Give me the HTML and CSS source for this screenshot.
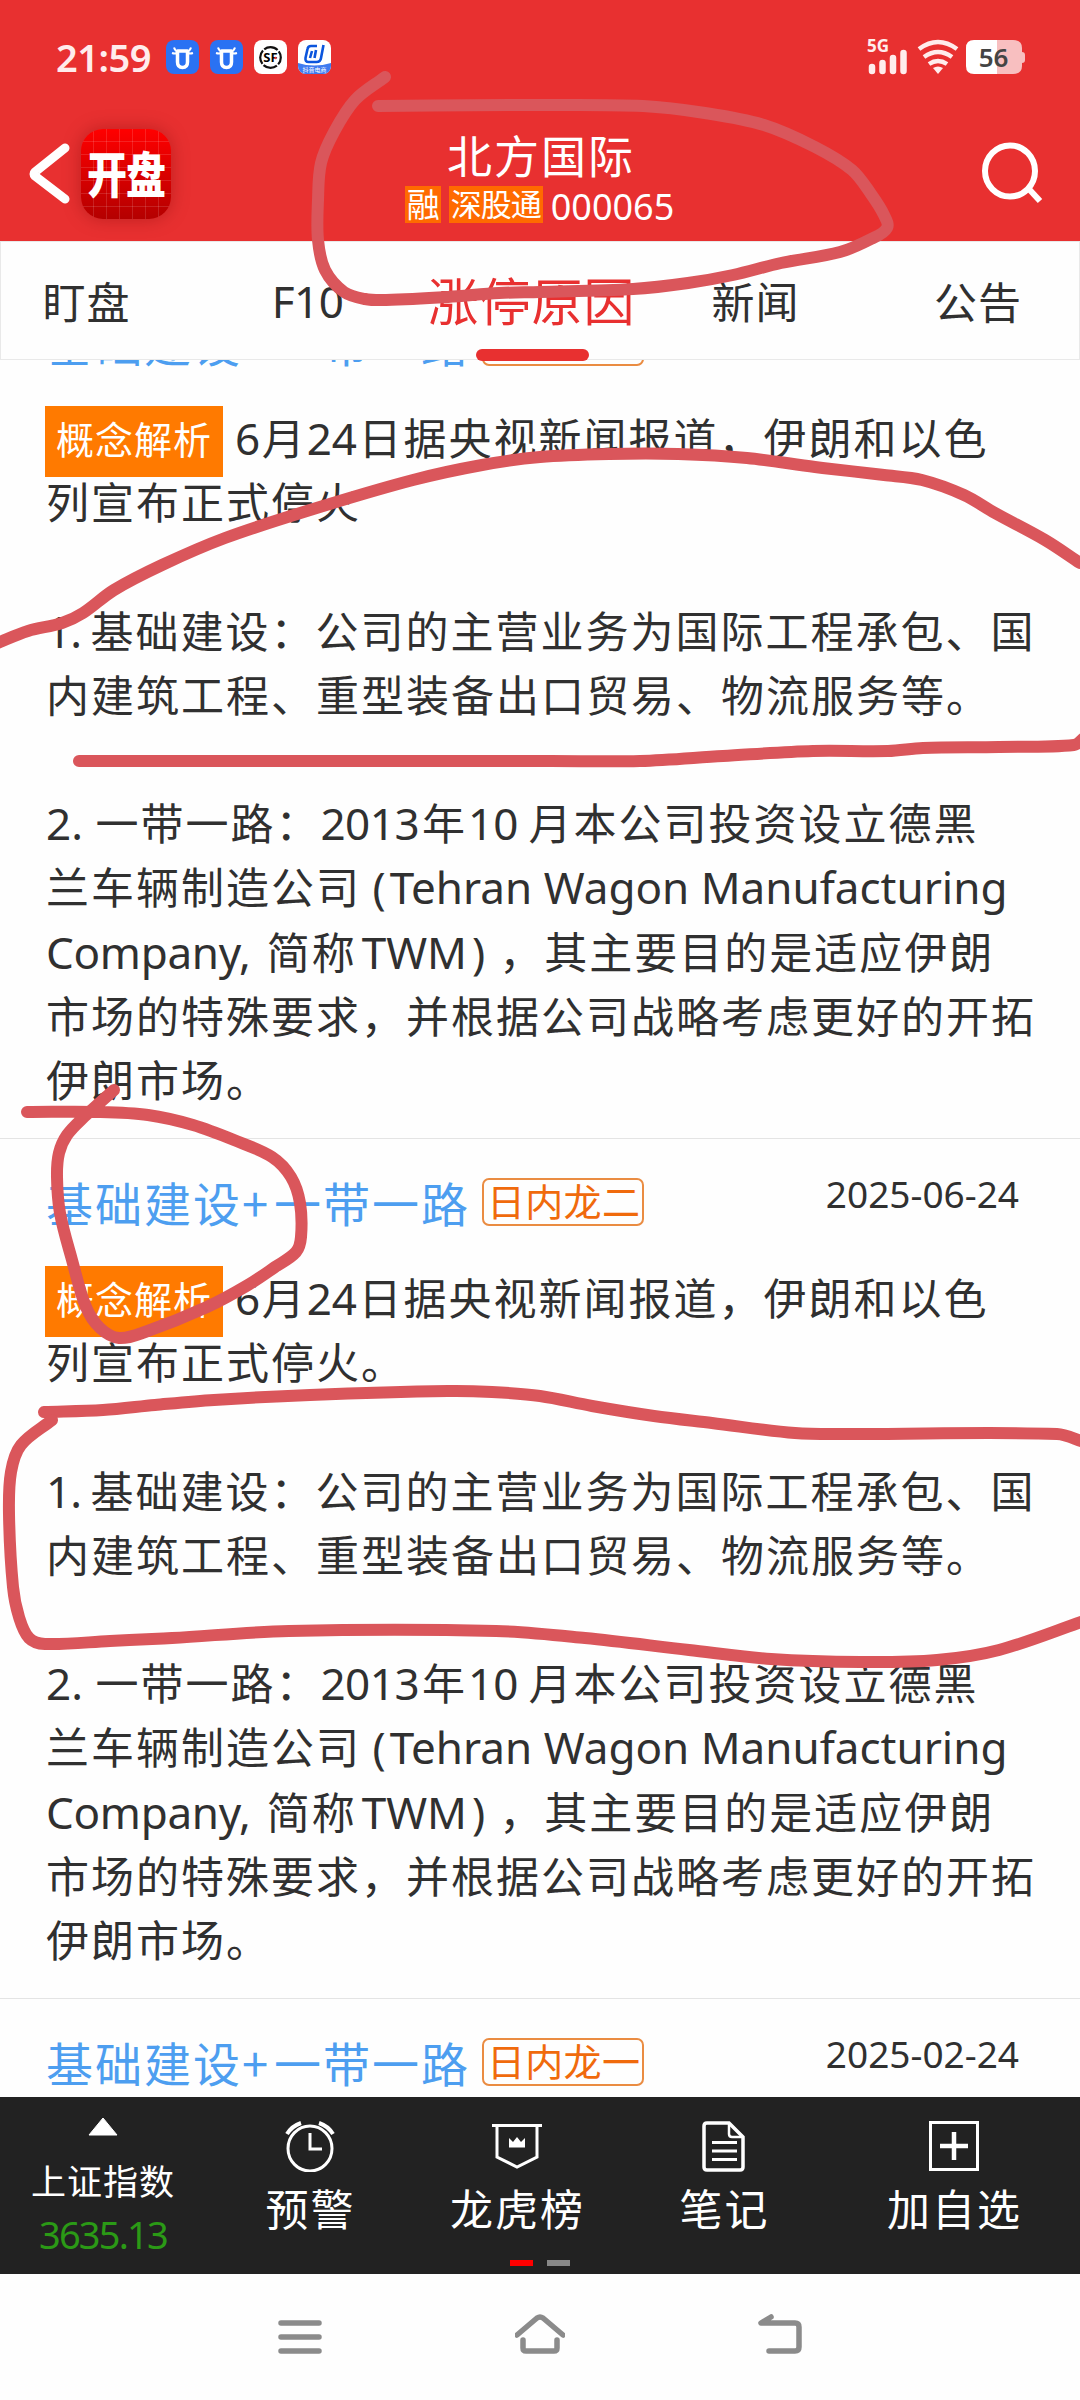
FILE: index.html
```html
<!DOCTYPE html>
<html lang="zh-CN">
<head>
    <meta charset="UTF-8">
    <meta name="viewport" content="width=device-width, initial-scale=1.0">
    <title>北方国际 000065</title>
    <link rel="stylesheet" href="styles.css">
</head>
<body>
    <!-- Header -->
    <header class="header">
        <div class="status">
            <span class="clock">21:59</span>
            <div class="notify">
                <svg width="33" height="34" viewBox="0 0 33 34">
                    <rect width="33" height="34" rx="8" fill="#2a72f3"/>
                    <path d="M8 7.500q1 3.500 4 4M25 7.500q-1 3.500-4 4M6 13q3 1 5 0M27 13q-3 1-5 0" stroke="#fff" stroke-width="2" fill="none"/>
                    <path d="M11.500 11h10v11q0 5.500-5 5.500t-5-5.500z" stroke="#fff" stroke-width="3.500" stroke-linejoin="round" fill="none"/>
                </svg>
                <svg width="33" height="34" viewBox="0 0 33 34">
                    <rect width="33" height="34" rx="8" fill="#2a72f3"/>
                    <path d="M8 7.500q1 3.500 4 4M25 7.500q-1 3.500-4 4M6 13q3 1 5 0M27 13q-3 1-5 0" stroke="#fff" stroke-width="2" fill="none"/>
                    <path d="M11.500 11h10v11q0 5.500-5 5.500t-5-5.500z" stroke="#fff" stroke-width="3.500" stroke-linejoin="round" fill="none"/>
                </svg>
                <svg width="33" height="34" viewBox="0 0 33 34">
                    <rect width="33" height="34" rx="8" fill="#fff"/>
                    <circle cx="16.500" cy="17.500" r="10.300" fill="none" stroke="#111" stroke-width="2.200" stroke-dasharray="14.500 1.680" stroke-dashoffset="7"/>
                    <text x="16.500" y="22" text-anchor="middle" class="sf">SF</text>
                    <circle cx="21.500" cy="18" r="1.200" fill="#e33"/>
                </svg>
                <svg width="33" height="34" viewBox="0 0 33 34">
                    <defs><clipPath id="r"><rect width="33" height="34" rx="8"/></clipPath></defs>
                    <g clip-path="url(#r)">
                        <rect width="33" height="34" fill="#fff"/>
                        <path d="M0 23q16 5 33 0v11H0z" fill="#3f7bf0"/>
                        <path d="M19 6h-6q-3 0-3.500 3l-2 9q-.5 4 3 4h8q4 0 4.500-4L25.500 5M14 11l-2 7M18 10l-1.500 8" fill="none" stroke="#0b55dd" stroke-width="2.600"/>
                        <text x="16.500" y="32" text-anchor="middle" class="shop">抖音电商</text>
                    </g>
                </svg>
            </div>
            <svg class="signal" width="162" height="38" viewBox="0 0 162 38">
                <text x="0" y="15" class="net">5G</text>
                <path d="M5 30v4M15.500 26v8M26 21v13M36.500 16v18" stroke="#ffecec" stroke-width="6.500" stroke-linecap="round"/>
                <path d="M52 12q19-14 38 0M57 20q14-10 28 0M62 27q9-6 18 0" fill="none" stroke="#ffecec" stroke-width="4.500"/>
                <path d="M66 31q5-3 10 0l-5 6z" fill="#ffecec"/>
                <path d="M130 3h16q9 0 9 8v4q3 0 3 3v5q0 3-3 3v3q0 8-9 8h-16z" fill="#f8bfc0"/>
                <path d="M107 3h23v34h-23q-8 0-8-8V11q0-8 8-8z" fill="#fff"/>
                <text x="126.500" y="30" text-anchor="middle" class="power">56</text>
            </svg>
        </div>

        <div class="topbar">
            <svg class="back" width="42" height="64" viewBox="0 0 42 64">
                <path d="M36 6L6 30Q4 32 6 34L36 57" fill="none" stroke="#fff" stroke-width="9" stroke-linecap="round" stroke-linejoin="round"/>
            </svg>
            <div class="logo"><span>开盘</span></div>
            <div class="stock">
                <div class="stock-name">北方国际</div>
                <div class="stock-info"><span class="mark">融</span><span class="mark">深股通</span><span class="code">000065</span></div>
            </div>
            <svg class="search" width="64" height="64" viewBox="0 0 64 64">
                <ellipse cx="30" cy="31" rx="25" ry="25.500" fill="none" stroke="#fff" stroke-width="6"/>
                <path d="M48 48l12 13" stroke="#fff" stroke-width="6"/>
            </svg>
        </div>
    </header>

    <!-- Tabs -->
    <nav class="tabs">
        <span>盯盘</span>
        <span class="en">F10</span>
        <span class="active">涨停原因</span>
        <span>新闻</span>
        <span>公告</span>
    </nav>

    <!-- Liste -->
    <main class="list">
        <article class="item scrolled">
            <div class="item-head"><h2>基础建设<i>+</i>一带一路</h2><span class="rank">日内龙二</span><time>2025-06-24</time></div>
            <p><b>概念解析</b><span class="n day">6</span>月<span class="n day">24</span>日据央视新闻报道，伊朗和以色<br>列宣布正式停火<br><br>
            <span class="n one">1. </span>基础建设：公司的主营业务为国际工程承包、国<br>内建筑工程、重型装备出口贸易、物流服务等。<br><br>
            <span class="n two">2. </span>一带一路：<span class="n year">2013</span>年<span class="n month">10</span>月本公司投资设立德黑<br>兰车辆制造公司<span class="n">&nbsp;<u>(</u>Tehran Wagon Manufacturing</span><br><span class="n company">Company, </span>简称<span class="n twm">TWM<s>)</s></span>，其主要目的是适应伊朗<br>市场的特殊要求，并根据公司战略考虑更好的开拓<br>伊朗市场。</p>
        </article>

        <article class="item">
            <div class="item-head"><h2>基础建设<i>+</i>一带一路</h2><span class="rank">日内龙二</span><time>2025-06-24</time></div>
            <p><b>概念解析</b><span class="n day">6</span>月<span class="n day">24</span>日据央视新闻报道，伊朗和以色<br>列宣布正式停火。<br><br>
            <span class="n one">1. </span>基础建设：公司的主营业务为国际工程承包、国<br>内建筑工程、重型装备出口贸易、物流服务等。<br><br>
            <span class="n two">2. </span>一带一路：<span class="n year">2013</span>年<span class="n month">10</span>月本公司投资设立德黑<br>兰车辆制造公司<span class="n">&nbsp;<u>(</u>Tehran Wagon Manufacturing</span><br><span class="n company">Company, </span>简称<span class="n twm">TWM<s>)</s></span>，其主要目的是适应伊朗<br>市场的特殊要求，并根据公司战略考虑更好的开拓<br>伊朗市场。</p>
        </article>

        <article class="item">
            <div class="item-head"><h2>基础建设<i>+</i>一带一路</h2><span class="rank">日内龙一</span><time>2025-02-24</time></div>
        </article>
    </main>

    <!-- Toolbar -->
    <footer class="toolbar">
        <div class="tool index">
            <svg width="30" height="19" viewBox="0 0 30 19"><path d="M15 1L29 18H1z" fill="#fff" stroke="#fff" stroke-linejoin="round"/></svg>
            <span>上证指数</span>
            <em>3635.13</em>
        </div>
        <div class="tool">
            <svg width="50" height="52" viewBox="0 0 50 52" fill="none" stroke="#fff">
                <ellipse cx="25" cy="28.500" rx="22" ry="22.500" stroke-width="3"/>
                <path d="M25 13v16h12" stroke-width="3"/>
                <path d="M2 14Q7 6 16 3M48 14Q43 6 34 3" stroke-width="4"/>
            </svg>
            <span>预警</span>
        </div>
        <div class="tool">
            <svg width="50" height="52" viewBox="0 0 50 52" fill="none" stroke="#fff" stroke-width="3">
                <path d="M0 5.500h50M5 5v32l20 10 20-10V5"/>
                <path d="M17 27.500V18l4 4 4-5 4 5 4-4v9.500z" fill="#fff" stroke="none"/>
            </svg>
            <span>龙虎榜</span>
        </div>
        <div class="tool">
            <svg width="50" height="52" viewBox="0 0 50 52" fill="none" stroke="#fff" stroke-width="3.500">
                <path d="M8 3h22l14 14v30q0 3-3 3H8q-3 0-3-3V6q0-3 3-3z"/>
                <path d="M30 3v11q0 3 3 3h11" stroke-width="2.500"/>
                <path d="M13 22.500h25M13 31h25M13 39.500h25" stroke-width="3"/>
            </svg>
            <span>笔记</span>
        </div>
        <div class="tool">
            <svg width="50" height="52" viewBox="0 0 50 52" fill="none" stroke="#fff" stroke-width="3">
                <rect x="1.500" y="2.500" width="47" height="47"/>
                <path d="M11 26h28M25 12v28" stroke-width="4.500"/>
            </svg>
            <span>加自选</span>
        </div>
        <div class="pager"><i></i><i></i></div>
    </footer>

    <!-- System navigation -->
    <nav class="sysnav">
        <svg width="50" height="44" viewBox="0 0 50 44"><path d="M6 10h38M6 24h38M6 38h38"/></svg>
        <svg width="50" height="44" viewBox="0 0 50 44"><path d="M2 22L22 5q3-2 6 0L48 22M8 27v8q0 3 3 3h28q3 0 3-3v-8"/></svg>
        <svg width="50" height="44" viewBox="0 0 50 44"><path d="M16 4L6 10h34q4 0 4 4v20q0 4-4 4H14"/></svg>
    </nav>

    <!-- Freehand marks over the page -->
    <svg class="marks" width="1080" height="2400" viewBox="0 0 1080 2400">
        <path data-points="385,77 355,100 334,132 321,163 318,200 318,240 325,270 344,292 365,299 386,300 448,297 499,293 540,292 633,289 688,283 733,275 781,263 840,252 871,239 887,228 884,215 871,194 852,170 815,147 764,125 705,113 643,106 540,105 378,106"/>
        <path data-points="-8,646 0,642 28,631 62,623 83,613 114,590 162,565 225,538 310,510 413,480 482,465 540,457 609,454 678,454 747,458 815,467 884,475 922,480 964,495 995,513 1045,540 1080,563"/>
        <path data-points="79,761 551,761 640,761 723,756 813,751 888,751 923,748 999,747 1074,745 1084,738"/>
        <path data-points="114,1090 84,1117 67,1135 59,1153 57,1177 60,1213 72,1260 86,1307 100,1328 119,1338 145,1332 207,1307 248,1285 275,1267 296,1252 301,1237 300,1203 291,1177 272,1157 234,1140 193,1125 148,1115 100,1112 27,1112"/>
        <path data-points="44,1412 103,1410 155,1405 214,1400 310,1395 448,1391 492,1392 540,1396 592,1406 654,1416 712,1423 795,1433 850,1434 1057,1434 1084,1442"/>
        <path data-points="52,1420 21,1445 11,1472 9,1514 13,1587 19,1617 29,1638 45,1644 110,1641 172,1638 289,1631 496,1631 585,1638 689,1650 771,1659 861,1662 937,1660 999,1650 1084,1621"/>
    </svg>

    <script>
        // Smooth curve through all points of each mark
        document.querySelectorAll(".marks path").forEach(path => {
            const p = path.dataset.points.split(" ").map(s => s.split(",").map(Number));
            let d = "M" + p[0];
            for (let i = 0; i < p.length - 1; i++) {
                const a = p[i - 1] || p[i], b = p[i], c = p[i + 1], e = p[i + 2] || c;
                const len = Math.hypot(c[0] - b[0], c[1] - b[1]);
                const t1 = Math.hypot(c[0] - a[0], c[1] - a[1]) || 1;
                const t2 = Math.hypot(e[0] - b[0], e[1] - b[1]) || 1;
                const x1 = b[0] + (c[0] - a[0]) / t1 * len / 3, y1 = b[1] + (c[1] - a[1]) / t1 * len / 3;
                const x2 = c[0] - (e[0] - b[0]) / t2 * len / 3, y2 = c[1] - (e[1] - b[1]) / t2 * len / 3;
                d += `C${x1},${y1} ${x2},${y2} ${c}`;
            }
            path.setAttribute("d", d);
        });
    </script>
</body>
</html>
```
FILE: styles.css
```css
* {
    box-sizing: border-box;
}

body {
    margin: 0;
    width: 1080px;
    height: 2400px;
    position: relative;
    display: flex;
    flex-direction: column;
    overflow: hidden;
    background: #fefefe;
    color: #303030;
    font-family: "Noto Sans CJK SC", sans-serif;
    white-space: nowrap;
}

svg {
    display: block;
    flex: none;
}

/* Header */
.header {
    height: 241px;
    flex: none;
    background: #e83030;
    color: #fff;
}

.status {
    height: 114px;
    padding: 0 51px 0 56px;
    display: flex;
    align-items: center;
}

.clock {
    width: 110px;
    font: 600 38px "Noto Sans", sans-serif;
    letter-spacing: -0.5px;
    color: #ffecec;
}

.notify {
    display: flex;
    gap: 11px;
}

.signal {
    margin-left: auto;
    margin-top: -2px;
}

.sf {
    font: 700 13px "Noto Sans", sans-serif;
}

.shop {
    font: 6px "Noto Sans CJK SC", sans-serif;
    fill: #fff;
}

.net {
    font: 700 17px "Noto Sans", sans-serif;
    fill: #ffecec;
}

.power {
    font: 600 26px "Noto Sans", sans-serif;
    fill: #444;
}

.topbar {
    height: 127px;
    padding: 0 36px 0 29px;
    display: flex;
    align-items: flex-start;
}

.back {
    margin-top: 28px;
}

.logo {
    width: 90px;
    height: 90px;
    margin: 15px 0 0 10px;
    border-radius: 22px;
    background:
        repeating-linear-gradient(90deg, transparent 0 12px, rgba(255, 255, 255, 0.13) 12px 13px),
        repeating-linear-gradient(transparent 0 12px, rgba(255, 255, 255, 0.13) 12px 13px),
        linear-gradient(#ff0000, #b40000);
    box-shadow: 0 0 18px rgba(110, 0, 0, 0.35);
    font-size: 40px;
    font-weight: 900;
    line-height: 86px;
    letter-spacing: -1px;
    text-align: center;
}

.logo span {
    display: inline-block;
    transform: scaleY(1.22);
}

.stock {
    width: 740px;
    flex: none;
    text-align: center;
}

.stock-name {
    height: 72px;
    padding-top: 9px;
    font-size: 45px;
    line-height: 64px;
    letter-spacing: 2px;
}

.stock-info {
    height: 37px;
    display: flex;
    justify-content: center;
    gap: 8px;
    padding-right: 3px;
}

.mark {
    height: 37px;
    padding: 0 2px;
    background: #ff6a00;
    font-size: 31px;
    line-height: 34px;
    letter-spacing: -1px;
}

.mark:first-child {
    font-size: 33px;
    padding: 0 2px;
}

.code {
    font: 36px/42px "Noto Sans", sans-serif;
}

.search {
    margin: 26px 0 0 auto;
}

/* Tabs */
.tabs {
    height: 119px;
    flex: none;
    border: 1px solid #e9e9e9;
    display: grid;
    grid-template-columns: 171px 271px 177px 271px 174px;
    justify-items: center;
    font-size: 43px;
    line-height: 116px;
    letter-spacing: 1px;
    background: #fefefe;
}

.tabs .en {
    font: 44px/119px "Noto Sans", sans-serif;
    letter-spacing: -0.5px;
}

.tabs .active {
    font-size: 51px;
    line-height: 115px;
    color: #e83030;
    position: relative;
}

.tabs .active::after {
    content: "";
    position: absolute;
    left: 50%;
    bottom: 0;
    width: 113px;
    height: 12px;
    margin-left: -56px;
    border-radius: 6px;
    background: #e83030;
}

/* Liste */
.list {
    height: 1737px;
    flex: none;
    overflow: hidden;
}

.item {
    height: 860px;
    padding: 0 0 0 46px;
    border-bottom: 1px solid #e4e4e4;
}

.scrolled {
    margin-top: -81px;
}

.item-head {
    height: 125px;
    padding-right: 61px;
    display: flex;
    align-items: flex-start;
}

h2 {
    margin: 0;
    font-size: 47px;
    font-weight: 400;
    line-height: 125px;
    letter-spacing: 2px;
    color: #4d9ef0;
}

h2 i {
    display: inline-block;
    width: 32px;
    font-style: normal;
    letter-spacing: 0;
}

.rank {
    height: 48px;
    margin: 39px 0 0 12px;
    padding: 0 2px 0 3px;
    border: 2px solid #ea8c42;
    border-radius: 7px;
    color: #f06a0c;
    font-size: 38px;
    line-height: 40px;
    letter-spacing: 0.3px;
}

time {
    margin: 30px 0 0 auto;
    font: 37px/50px "Noto Sans", sans-serif;
}

.item p {
    margin: 0;
    font-size: 43px;
    line-height: 64.2px;
    letter-spacing: 2px;
}

.item b {
    display: inline-block;
    width: 178px;
    height: 71px;
    margin: 2px 12px -9px -1px;
    vertical-align: top;
    background: #ff7a00;
    color: #fff;
    font-size: 38px;
    font-weight: 400;
    line-height: 64px;
    letter-spacing: 1px;
    text-align: center;
}

/* Ziffern und lateinischer Text */
.n {
    font-family: "Noto Sans", sans-serif;
    font-size: 44px;
    line-height: 1;
    letter-spacing: 0;
}

.day {
    margin-right: 1.5px;
}

.one {
    margin-right: -1px;
    letter-spacing: -1px;
}

.two {
    margin-right: 1px;
}

.year {
    margin-right: 3px;
    letter-spacing: -0.5px;
}

.month {
    margin: 0 10px 0 1px;
}

.company {
    margin-right: 5px;
    letter-spacing: -0.3px;
}

.twm {
    margin-left: 5px;
}

.n u {
    margin-right: 4px;
    text-decoration: none;
}

.n s {
    margin: 0 14px 0 5px;
    text-decoration: none;
}

/* Toolbar */
.toolbar {
    height: 177px;
    flex: none;
    position: relative;
    display: grid;
    grid-template-columns: 206px 207px 207px 207px 253px;
    background: #222;
    color: #fff;
}

.tool {
    padding-top: 23px;
    display: flex;
    flex-direction: column;
    align-items: center;
    font-size: 43px;
    line-height: 64px;
    letter-spacing: 2px;
}

.tool span {
    margin: 3px -2px 0 0;
}

.index {
    padding-top: 20px;
    font-size: 35px;
    line-height: 50px;
    letter-spacing: 1px;
}

.index span {
    margin: 19px 0 0;
}

.index em {
    margin-top: 4px;
    font: 38px/50px "Noto Sans", sans-serif;
    letter-spacing: -1.8px;
    color: #2b9a16;
}

.pager {
    position: absolute;
    left: 510px;
    bottom: 8px;
    display: flex;
    gap: 14px;
}

.pager i {
    width: 23px;
    height: 6px;
    background: #888;
}

.pager i:first-child {
    background: #f00;
}

/* System navigation */
.sysnav {
    height: 126px;
    padding: 39px 275px 0;
    display: flex;
    justify-content: space-between;
}

.sysnav path {
    fill: none;
    stroke: #8b8b8b;
    stroke-width: 5.5;
    stroke-linecap: round;
    stroke-linejoin: round;
}

/* Freehand marks */
.marks {
    position: absolute;
    left: 0;
    top: 0;
    pointer-events: none;
}

.marks path {
    fill: none;
    stroke: #da565b;
    stroke-width: 12;
    stroke-linecap: round;
    stroke-linejoin: round;
}
```
